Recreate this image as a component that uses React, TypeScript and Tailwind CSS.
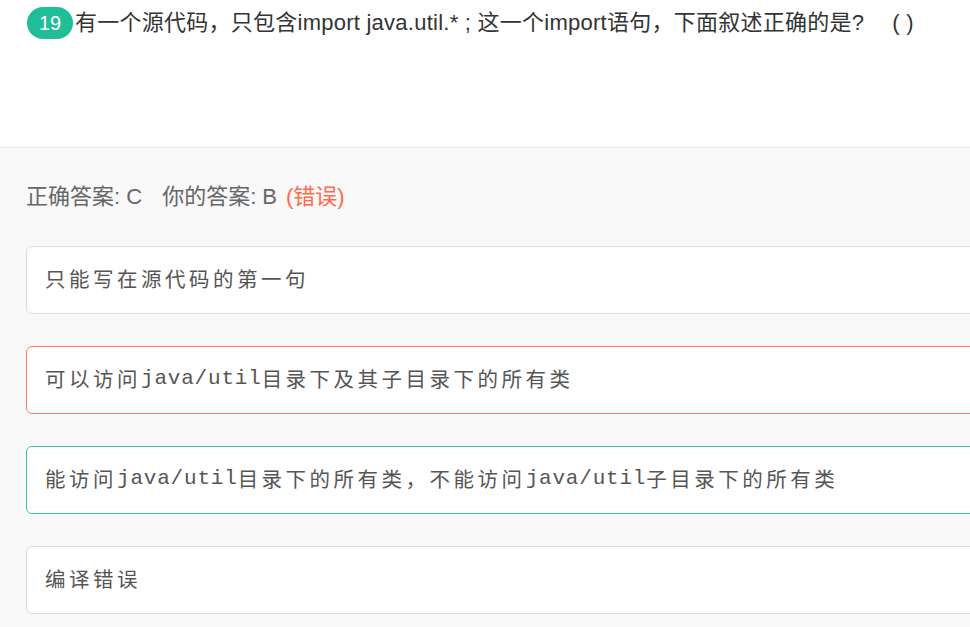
import React from "react";

type Seg = { t: string; mono?: boolean };

const options: { segs: Seg[]; border: string }[] = [
  { segs: [{ t: "只能写在源代码的第一句" }], border: "border-[#dcdcdc]" },
  {
    segs: [
      { t: "可以访问" },
      { t: "java/util", mono: true },
      { t: "目录下及其子目录下的所有类" },
    ],
    border: "border-[#ff7a5a]",
  },
  {
    segs: [
      { t: "能访问" },
      { t: "java/util", mono: true },
      { t: "目录下的所有类，不能访问" },
      { t: "java/util", mono: true },
      { t: "子目录下的所有类" },
    ],
    border: "border-[#2ec4a0]",
  },
  { segs: [{ t: "编译错误" }], border: "border-[#dcdcdc]" },
];

export default function App() {
  return (
    <div
      className="w-[970px] h-[627px] overflow-hidden bg-[#f8f8f8]"
      style={{ fontFamily: '"Liberation Sans", "Noto Sans CJK SC", sans-serif' }}
    >
      <div className="h-[148px] bg-white border-b border-[#ececec]">
        <div className="flex items-center pt-[7px] pl-[27px]">
          <span className="flex items-center justify-center w-[46px] h-[32px] rounded-full bg-[#1fbd98] text-white text-[20px] leading-none">
            19
          </span>
          <span className="ml-[2px] text-[22px] tracking-[0.25px] leading-[30px] text-[#333]">
            有一个源代码，只包含import java.util.* ; 这一个import语句，下面叙述正确的是?
            <span className="ml-[28px]">( )</span>
          </span>
        </div>
      </div>
      <div className="pl-[26px] pt-[34px]">
        <div className="text-[22px] leading-[30px] text-[#666] flex">
          <span>正确答案: C</span>
          <span className="ml-[20px]">你的答案: B</span>
          <span className="ml-[9px] text-[#ff6a4d]">(错误)</span>
        </div>
        <div className="mt-[34px] flex flex-col gap-[32px]">
          {options.map((o, i) => (
            <div
              key={i}
              className={`w-[980px] h-[68px] bg-white border ${o.border} rounded-[6px] flex items-center pl-[18px] pb-[3px] text-[#555]`}
            >
              {o.segs.map((s, j) =>
                s.mono ? (
                  <span
                    key={j}
                    className="text-[21px] tracking-[0.8px]"
                    style={{ fontFamily: '"Liberation Mono", monospace' }}
                  >
                    {s.t}
                  </span>
                ) : (
                  <span
                    key={j}
                    className="text-[20.5px] tracking-[3.5px]"
                    style={{ fontFamily: '"Noto Sans CJK SC", sans-serif' }}
                  >
                    {s.t}
                  </span>
                )
              )}
            </div>
          ))}
        </div>
      </div>
    </div>
  );
}
